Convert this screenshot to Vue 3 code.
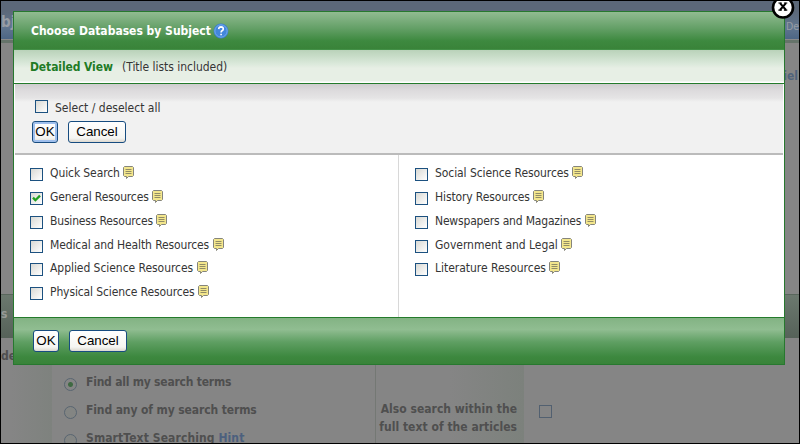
<script setup>
const columns = [
  [
    { name: 'Quick Search', w: 70, track: -0.1 },
    { name: 'General Resources', w: 99, track: -0.14 },
    { name: 'Business Resources', w: 103, track: -0.17 },
    { name: 'Medical and Health Resources', w: 160, track: -0.12 },
    { name: 'Applied Science Resources', w: 144, track: -0.05 },
    { name: 'Physical Science Resources', w: 145, track: -0.12 },
  ],
  [
    { name: 'Social Science Resources', w: 134, track: -0.08 },
    { name: 'History Resources', w: 95, track: -0.12 },
    { name: 'Newspapers and Magazines', w: 147, track: -0.18 },
    { name: 'Government and Legal', w: 123, track: -0.03 },
    { name: 'Literature Resources', w: 111, track: -0.02 },
  ],
]
const checked = 'General Resources'
</script>

<template>
  <div class="page">
    <div class="topbar"><b>bj</b><span>De</span></div>
    <div class="toprule"></div>
    <div class="crumbs">iel</div>
    <div class="band"><b>s</b></div>
    <div class="options">
      <div class="side">de</div>
      <div class="modes">
        <div class="mode"><i class="radio on"></i><span>Find all my search terms</span></div>
        <div class="mode"><i class="radio"></i><span>Find any of my search terms</span></div>
        <div class="mode"><i class="radio"></i><span>SmartText Searching <em>Hint</em></span></div>
      </div>
      <div class="also"><span>Also search within the<br />full text of the articles</span></div>
      <i class="dimbox"></i>
    </div>

    <section class="dialog">
      <header class="title">
        <span>Choose Databases by Subject</span>
        <svg width="16" height="16" viewBox="0 0 16 16">
          <circle cx="8" cy="8" r="7.4" fill="#3a7bd0" />
          <circle cx="8" cy="8" r="6.2" fill="#4386dc" stroke="#83b7f2" stroke-width=".8" />
          <path d="M5.7 6.1Q5.8 3.9 8 3.9Q10.3 4 10.3 5.9Q10.3 7 9 7.7Q8.1 8.2 8.1 9.4M8.1 10.7V12.2" fill="none" stroke="#fff" stroke-width="1.6" />
        </svg>
      </header>
      <div class="view"><b>Detailed View</b><span>(Title lists included)</span></div>
      <div class="tools">
        <label class="all"><i class="box"></i><span>Select / deselect all</span></label>
        <div class="buttons"><button class="ok focus">OK</button><button class="cancel">Cancel</button></div>
      </div>
      <div class="lists">
        <ul v-for="(items, c) in columns" :key="c">
          <li v-for="item in items" :key="item.name">
            <i class="box">
              <svg v-if="item.name === checked" width="11" height="11" viewBox="0 0 11 11">
                <path d="M2 4.6L4.4 7.2L9 2.6" fill="none" stroke="#21a121" stroke-width="2.3" />
              </svg>
            </i>
            <span class="name" :style="{ width: item.w + 'px', letterSpacing: item.track + 'px' }">{{ item.name }}</span>
            <svg class="note" width="11" height="13" viewBox="0 0 11 13">
              <path d="M1.5 .5H9.5L10.5 1.5V9.5L9.5 10.5H5.5L3.5 12.5V10.5H1.5L.5 9.5V1.5Z" fill="#f3e68c" stroke="#85857c" />
              <path d="M2.5 3.5H8.5M2.5 5.5H8.5M2.5 7.5H8.5" stroke="#918c66" />
            </svg>
          </li>
        </ul>
      </div>
      <footer class="buttons"><button class="ok">OK</button><button class="cancel">Cancel</button></footer>
    </section>
    <svg class="close" width="24" height="20" viewBox="0 0 24 20">
      <circle cx="12" cy="7.5" r="10" fill="#fff" stroke="#000" stroke-width="2.6" />
      <path d="M9 3.2L15 10M15 3.2L9 10" stroke="#000" stroke-width="2" />
      <path d="M7.4 3H10.8M12.9 3H16.3M7.4 10.2H10.8M12.9 10.2H16.3" stroke="#000" stroke-width="1.2" />
    </svg>
  </div>
</template>

<style>
body { overflow: hidden; }
</style>

<style scoped>
* { box-sizing: border-box; }
.page {
  position: relative; width: 800px; height: 444px; overflow: hidden;
  border: 1px solid #000; background: #858585; color: #4f4f4f;
  font: 12px/16px "DejaVu Sans Condensed", "DejaVu Sans", sans-serif;
  font-stretch: condensed; white-space: nowrap;
}
.topbar {
  height: 38px; display: flex; justify-content: space-between; align-items: center;
  padding-top: 4px; background: linear-gradient(#5c6879 0 10px, #60758f 26px, #4d6685);
  color: #969ca4;
}
.topbar b { font-size: 15px; }
.topbar span { font-size: 10.5px; padding-top: 8px; }
.toprule { height: 4px; background: #65736a; border-top: 1px solid #898989; }
.crumbs { height: 251px; padding: 25px 1px 0 0; text-align: right; color: #50637c; font-weight: bold; }
.band { height: 44px; background: linear-gradient(#6b786e, #566259); border-top: 1px solid #59665c; padding-top: 11px; color: #969a96; }
.options { display: flex; height: 106px; font-weight: bold; }
.side { width: 51px; padding-top: 10px; background: linear-gradient(90deg, #858585 10px, #7e827e); }
.modes { width: 324px; padding: 36px 0 0 12px; border-right: 1px solid #747874; }
.mode { display: flex; align-items: flex-start; height: 28px; gap: 9px; letter-spacing: -.22px; }
.mode:nth-child(2) { letter-spacing: -.11px; }
.mode:nth-child(3) { letter-spacing: .1px; }
.mode em { color: #4c607e; font-style: normal; }
.radio { width: 13px; height: 13px; margin-top: 4px; border: 1px solid #596571; border-radius: 50%; background: #838583; }
.radio.on { background: radial-gradient(circle, #3f6942 0 2px, #858585 3px); }
.also { width: 148px; padding: 62px 7px 0 0; text-align: right; line-height: 18px; letter-spacing: .03px; background: linear-gradient(90deg, #858585 50%, #7c817c); }
.dimbox { width: 13px; height: 13px; margin: 67px 0 0 15px; border: 1px solid #526070; }
.dialog {
  position: absolute; left: 12px; top: 10px; width: 772px; height: 354px;
  display: flex; flex-direction: column; border: 1px solid #27782f; background: #fff; color: #353535;
}
.title {
  height: 37px; display: flex; align-items: center; gap: 2px; padding: 1px 0 0 17px;
  color: #fff; font-weight: bold; background: linear-gradient(#91bb91, #66a169 42%, #3d893f 78%, #398339);
}
.view {
  height: 35px; display: flex; align-items: center; padding: 0 0 0 16px;
  border-top: 1px solid #439047; border-bottom: 1px solid #247b2b;
  background: linear-gradient(#b9d2b9, #d9e8d9 40%, #e7efe5 55%, #e7efe5 31px, #fff 32px);
}
.view b { color: #217b25; width: 92px; letter-spacing: -.1px; }
.view span { letter-spacing: -.03px; }
.tools {
  height: 71px; margin: 0 1px; padding: 16px 0 0 17px; border-bottom: 2px solid #bbb;
  background: linear-gradient(#cfcdcf, #dcdadc 6px, #e5e4e5 14px, #f1f1f1 18px);
}
.all { display: flex; height: 21px; gap: 7px; padding-left: 3px; }
.box {
  display: block; flex: none; width: 13px; height: 13px; border: 1px solid #1c5180;
  background: linear-gradient(135deg, #d9d9d4, #fff);
}
.box svg { display: block; }
.buttons { display: flex; gap: 10px; }
button {
  height: 22px; padding: 0; border: 1px solid #174c80; border-radius: 3px;
  background: linear-gradient(#fff, #f5f5f2 80%, #dcd8cf); color: #000;
  font: 13.33px/18px "Liberation Sans", sans-serif;
}
.ok { width: 26px; }
.cancel { width: 58px; }
.focus { box-shadow: inset 0 0 0 2px #9fbfed; }
.lists { display: flex; height: 162px; }
ul { margin: 0; padding: 11px 0 0 16px; width: 384px; list-style: none; }
ul + ul { border-left: 1px solid #d8d8d8; }
li { display: flex; height: 23.85px; }
li .box { margin-top: 2px; }
.name { margin: -1px 3px 0 7px; }
.note { display: block; }
footer {
  flex: 1; padding: 12px 0 0 19px; border-top: 1px solid #247b2b;
  background: linear-gradient(#83b384, #90bd91 25%, #5f9f63 52%, #3d883f 84%, #398339);
}
.close { position: absolute; left: 770px; top: -1px; }
</style>
